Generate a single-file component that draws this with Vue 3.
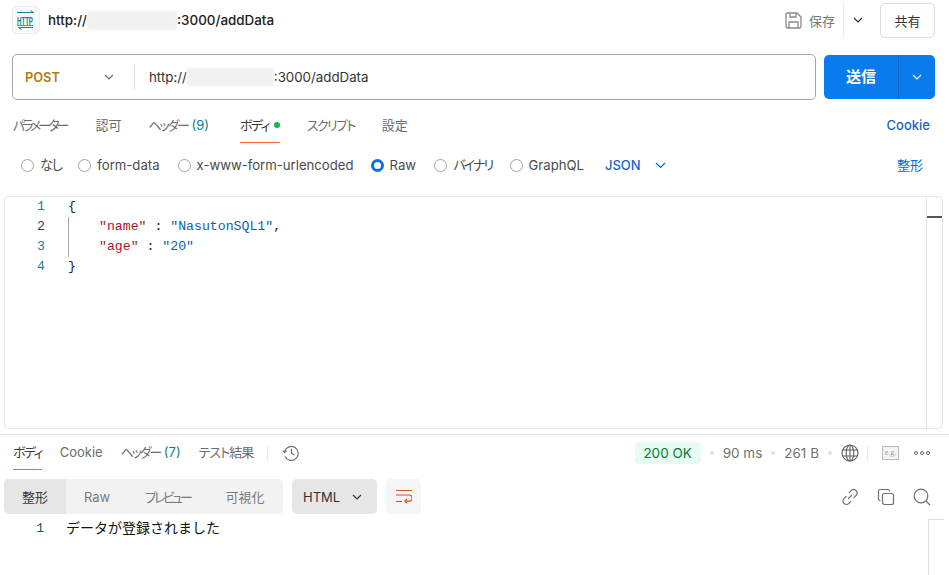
<script setup>
const reqTabs = [
  { label: 'パラメーター', fit: 'tight-30' },
  { label: '認可' },
  { label: 'ヘッダー', fit: 'tight-22', count: '(9)' },
  { label: 'ボディ', fit: 'tight-17', active: true, dot: true },
  { label: 'スクリプト', fit: 'tight-16' },
  { label: '設定' }
]
const radios = [
  { label: 'なし', fit: 'tight-25 nudge', close: true },
  { label: 'form-data' },
  { label: 'x-www-form-urlencoded', close: true },
  { label: 'Raw', on: true },
  { label: 'バイナリ', fit: 'tight-32 nudge', close: true },
  { label: 'GraphQL' }
]
const resTabs = [
  { label: 'ボディ', fit: 'tight-17', active: true },
  { label: 'Cookie' },
  { label: 'ヘッダー', fit: 'tight-22', count: '(7)' },
  { label: 'テスト結果', fit: 'tight-10' }
]
</script>

<template>
  <div class="app">
    <header class="head">
      <div class="logo">
        <svg width="20" height="20" viewBox="0 0 20 20" fill="none" stroke="#1f7f93" stroke-width="1">
          <path d="M1 2.500h16.500L14.500 .5" />
          <path d="M17 17.500H2.500l3 2" />
          <text transform="translate(1 14.500) scale(1 1.800)" class="logo-text">HTTP</text>
          <path d="M1 15.500h16" stroke-width=".8" />
        </svg>
      </div>
      <div class="title">http://<span class="blur b1"></span>:3000/addData</div>
      <div class="head-right">
        <svg class="save-ic" width="17" height="17" viewBox="0 0 17 17" fill="none" stroke="#8a8a8a" stroke-width="1.300">
          <path d="M2.500 1h9.500l4 4v9.500a1.500 1.500 0 0 1-1.500 1.500h-12A1.500 1.500 0 0 1 1 14.500v-12A1.500 1.500 0 0 1 2.500 1z" stroke-linejoin="round" />
          <path d="M5 1v4h6V1M4 16v-6h9v6" />
        </svg>
        <span class="save">保存</span>
        <span class="vsep"></span>
        <svg class="chev-save" width="10" height="6" viewBox="0 0 10 6" fill="none" stroke="#333" stroke-width="1.200"><path d="M1 1l4 4 4-4" /></svg>
        <button class="share">共有</button>
      </div>
    </header>

    <div class="req">
      <div class="urlbar">
        <span class="method">POST</span>
        <svg class="chev-m" width="10" height="6" viewBox="0 0 10 6" fill="none" stroke="#666" stroke-width="1.100"><path d="M1 1l4 4 4-4" /></svg>
        <span class="url-sep"></span>
        <span class="url">http://<span class="blur b2"></span>:3000/addData</span>
      </div>
      <div class="send">
        <span class="send-l">送信</span>
        <span class="send-r">
          <svg width="10" height="6" viewBox="0 0 10 6" fill="none" stroke="#fff" stroke-width="1.100"><path d="M1 1l4 4 4-4" /></svg>
        </span>
      </div>
    </div>

    <nav class="tabs">
      <span v-for="t in reqTabs" :key="t.label" class="tab" :class="{ active: t.active, counted: t.count }">
        <span :class="t.fit">{{ t.label }}</span><span v-if="t.count" class="count">{{ t.count }}</span><i v-if="t.dot" class="dot"></i>
      </span>
      <span class="cookie">Cookie</span>
    </nav>

    <div class="radios">
      <label v-for="r in radios" :key="r.label" class="radio" :class="{ close: r.close }">
        <i class="circle" :class="{ on: r.on }"></i><span :class="r.fit">{{ r.label }}</span>
      </label>
      <span class="json">JSON
        <svg width="11" height="7" viewBox="0 0 11 7" fill="none" stroke="#0b66d8" stroke-width="1.200"><path d="M1 1l4.500 4.500L10 1" /></svg>
      </span>
      <span class="fmt nudge">整形</span>
    </div>

    <section class="editor">
      <div class="gutter">
        <div>1</div><div class="dark">2</div><div>3</div><div>4</div>
      </div>
      <div class="code">
        <div class="guide"></div>
        <div class="ln"><span class="p">{</span></div>
        <div class="ln in"><span class="k">"name"</span> <span class="p">:</span> <span class="s">"NasutonSQL1"</span><span class="p">,</span></div>
        <div class="ln in"><span class="k">"age"</span> <span class="p">:</span> <span class="s">"20"</span></div>
        <div class="ln"><span class="p">}</span></div>
      </div>
      <div class="mini"><i></i></div>
    </section>

    <section class="res">
      <div class="res-head">
        <span v-for="t in resTabs" :key="t.label" class="rtab" :class="{ active: t.active }">
          <span :class="t.fit">{{ t.label }}</span><span v-if="t.count" class="count">{{ t.count }}</span>
        </span>
        <span class="rsep"></span>
        <svg class="hist" width="18" height="18" viewBox="0 0 18 18" fill="none" stroke="#6b6b6b" stroke-width="1.200">
          <path d="M2.600 7.400A7 7 0 1 1 3 12.500" />
          <path d="M.8 6.600l1.800 1.900 2-1.700" />
          <path d="M9.500 4.800v4.600l3 1.700" />
        </svg>
        <div class="res-meta">
          <span class="ok">200 OK</span>
          <i class="m-dot"></i><span class="meta">90 ms</span>
          <i class="m-dot"></i><span class="meta">261 B</span>
          <i class="m-dot"></i>
          <svg class="globe" width="18" height="18" viewBox="0 0 18 18" fill="none" stroke="#5f5f5f" stroke-width="1.100">
            <circle cx="9" cy="9" r="8" />
            <ellipse cx="9" cy="9" rx="3.800" ry="8" />
            <path d="M1.600 6h14.800M1.600 12h14.800M9 1v16" />
          </svg>
          <span class="msep"></span>
          <span class="eg">e.g.</span>
          <span class="more"><i></i><i></i><i></i></span>
        </div>
      </div>

      <div class="res-bar">
        <div class="seg">
          <span class="seg-on">整形</span>
          <span class="seg-i s1">Raw</span>
          <span class="seg-i s2">プレビュー</span>
          <span class="seg-i s3">可視化</span>
        </div>
        <div class="lang">HTML
          <svg width="10" height="6" viewBox="0 0 10 6" fill="none" stroke="#333" stroke-width="1.200"><path d="M1 1l4 4 4-4" /></svg>
        </div>
        <div class="wrap">
          <svg width="16" height="15" viewBox="0 0 16 15" fill="none" stroke="#e0502a" stroke-width="1.200">
            <path d="M0 1.500h16M0 6h13a3 3 0 0 1 0 6.200H9M0 12.500h6" />
            <path d="M11 10l-2.200 2.200 2.200 2" />
          </svg>
        </div>
        <div class="res-tools">
          <svg width="18" height="18" viewBox="0 0 18 18" fill="none" stroke="#707070" stroke-width="1.200" stroke-linecap="round">
            <path d="M7.500 10.500l3-3.200M8.300 4.700l1.900-2a3.300 3.300 0 0 1 4.900 4.600l-2.200 2.300M9.800 13.300l-1.900 2A3.300 3.300 0 0 1 3 10.700l2.200-2.300" />
          </svg>
          <svg width="18" height="18" viewBox="0 0 18 18" fill="none" stroke="#707070" stroke-width="1.200">
            <rect x="5.500" y="5.500" width="11" height="11" rx="2" />
            <path d="M3.500 12.500H3A1.500 1.500 0 0 1 1.500 11V3A1.500 1.500 0 0 1 3 1.500h8A1.500 1.500 0 0 1 12.500 3v.5" />
          </svg>
          <svg width="18" height="18" viewBox="0 0 18 18" fill="none" stroke="#707070" stroke-width="1.200">
            <circle cx="8" cy="8" r="6.800" />
            <path d="M13 13l4 4" />
          </svg>
        </div>
      </div>

      <div class="res-body">
        <span class="r-num">1</span>
        <span class="r-text">データが登録されました</span>
        <span class="r-scroll"></span>
      </div>
    </section>
  </div>
</template>

<style scoped>
.app {
  width: 949px;
  height: 575px;
  overflow: hidden;
  background: #fff;
  font-family: Inter, "Noto Sans CJK JP", sans-serif;
  font-size: 13px;
  color: #212121;
  display: flex;
  flex-direction: column;
  box-sizing: border-box;
}
.tight-32 { letter-spacing: -3.2px; }
.tight-30 { letter-spacing: -3px; padding-right: 2px; }
.tight-25 { letter-spacing: -2.5px; }
.tight-22 { letter-spacing: -2.25px; }
.tight-17 { letter-spacing: -1.7px; }
.tight-16 { letter-spacing: -1.6px; }
.tight-10 { letter-spacing: -1px; }
.nudge { margin-top: -2px; }
.head {
  display: flex;
  align-items: center;
  height: 40px;
  padding: 0 14px 0 12px;
  flex: none;
}
.logo {
  width: 28px;
  height: 28px;
  box-sizing: border-box;
  border: 1px solid #ececec;
  border-radius: 5px;
  background: #f9f9f9;
  display: flex;
  align-items: center;
  justify-content: center;
}
.logo-text {
  font-family: "Liberation Sans", sans-serif;
  font-size: 6.100px;
  font-weight: 700;
  fill: #1f7f93;
  stroke: none;
}
.title {
  margin-left: 8px;
  font-weight: 500;
  font-size: 13.400px;
  color: #212121;
  display: flex;
  align-items: center;
}
.blur {
  display: inline-block;
  background: #f1f1f1;
  border-radius: 2px;
  filter: blur(1px);
}
.b1 { width: 90px; height: 19px; }
.b2 { width: 87px; height: 18px; }
.head-right {
  margin-left: auto;
  display: flex;
  align-items: center;
  height: 36px;
}
.save-ic { margin-right: 7px; }
.save { color: #777; font-size: 13px; width: 26px; }
.vsep { width: 1px; height: 36px; background: #ededed; margin: 0 9px 0 8px; }
.chev-save { margin-right: 17px; }
.share {
  width: 55px;
  height: 35px;
  border: 1px solid #dcdcdc;
  border-radius: 5px;
  background: #fff;
  font: inherit;
  font-size: 13px;
  color: #333;
  padding: 0;
}
.req {
  display: flex;
  padding: 14px 14px 0 12px;
  gap: 8px;
  height: 46px;
  flex: none;
}
.urlbar {
  flex: 1;
  box-sizing: border-box;
  border: 1px solid #a6a6a6;
  border-radius: 5px;
  display: flex;
  align-items: center;
  padding-left: 12px;
}
.method { color: #b07d12; font-weight: 600; font-size: 12.800px; width: 79px; }
.url-sep { width: 1px; height: 26px; background: #e4e4e4; margin: 0 14px 0 20px; }
.url { color: #333; font-size: 13.300px; display: flex; align-items: center; }
.send {
  width: 111px;
  margin: 1px 0;
  background: #097bed;
  border-radius: 5px;
  display: flex;
  color: #fff;
  font-weight: 700;
  font-size: 15px;
}
.send-l { width: 74px; display: flex; align-items: center; justify-content: center; padding-bottom: 3px; box-sizing: border-box; }
.send-r {
  flex: 1;
  border-left: 1px solid #0667c8;
  display: flex;
  align-items: center;
  justify-content: center;
}
.tabs {
  display: flex;
  align-items: flex-start;
  height: 43px;
  padding: 0 19px 0 13px;
  box-sizing: border-box;
  flex: none;
  font-size: 13px;
  color: #6b6b6b;
  font-feature-settings: "palt";
}
.tab {
  margin-right: 27px;
  height: 43px;
  line-height: 17px;
  padding-top: 17px;
  box-sizing: border-box;
  white-space: nowrap;
  display: flex;
  align-items: flex-start;
}
.tab.counted { margin-right: 31px; }
.tab.active {
  color: #3a3a3a;
  position: relative;
}
.tab.active::after {
  content: "";
  position: absolute;
  left: 0;
  right: 0;
  top: 42px;
  height: 1px;
  background: #f26b3a;
}
.count { color: #0f7d8c; margin-left: 4px; }
.dot {
  width: 6px;
  height: 6px;
  border-radius: 50%;
  background: #0cbb52;
  margin: 5px 0 0 5px;
}
.cookie {
  margin-left: auto;
  padding-top: 17px;
  line-height: 17px;
  color: #1a5fcf;
  font-weight: 500;
  font-size: 13px;
}
.radios {
  display: flex;
  align-items: center;
  height: 44px;
  padding: 0 26px 0 21px;
  flex: none;
  font-size: 13.150px;
  color: #4a4a4a;
}
.radio {
  display: flex;
  align-items: center;
  margin-right: 18px;
  white-space: nowrap;
}
.radio.close { margin-right: 17px; }
.circle {
  width: 13px;
  height: 13px;
  box-sizing: border-box;
  border: 1px solid #a3a3a3;
  border-radius: 50%;
  margin-right: 6px;
}
.circle.on { border: 3.500px solid #0b6fd8; }
.json {
  display: flex;
  align-items: center;
  gap: 14px;
  color: #1a5fcf;
  font-weight: 500;
  margin-left: 3px;
  font-size: 13px;
}
.fmt { margin-left: auto; color: #0b66d8; font-size: 13px; }
.editor {
  position: relative;
  margin: 9px 6px 0 4px;
  height: 233px;
  flex: none;
  box-sizing: border-box;
  border: 1px solid #e6e6e6;
  border-radius: 5px;
  display: flex;
  font-family: "Liberation Mono", monospace;
  font-size: 13.200px;
  line-height: 20px;
}
.gutter {
  width: 40px;
  text-align: right;
  color: #2b7a94;
  flex: none;
}
.dark { color: #1a3f6b; }
.code {
  position: relative;
  margin-left: 23px;
  flex: 1;
}
.guide {
  position: absolute;
  left: 0;
  top: 20px;
  height: 40px;
  width: 1px;
  background: #a8a8a8;
}
.ln { height: 20px; white-space: pre; }
.in { padding-left: 31px; }
.k { color: #a3152c; }
.s { color: #0f5fa8; }
.p { color: #222; }
.mini {
  width: 15px;
  border-left: 1px solid #e6e6e6;
  flex: none;
  position: relative;
}
.mini i {
  position: absolute;
  left: 0;
  right: 0;
  top: 19px;
  height: 2px;
  background: #555;
}
.res {
  margin-top: 5px;
  border-top: 1px solid #e6e6e6;
  flex: 1;
  display: flex;
  flex-direction: column;
  min-height: 0;
}
.res-head {
  display: flex;
  align-items: flex-start;
  height: 35px;
  padding: 0 19px 0 13px;
  flex: none;
  font-size: 13px;
  color: #6b6b6b;
  font-feature-settings: "palt";
}
.rtab {
  height: 35px;
  box-sizing: border-box;
  padding-top: 9px;
  line-height: 17px;
  margin-right: 18px;
  white-space: nowrap;
  display: flex;
  position: relative;
}
.rtab.active { color: #3a3a3a; }
.rtab.active::after {
  content: "";
  position: absolute;
  left: 0;
  right: 0;
  top: 34px;
  height: 1px;
  background: #f26b3a;
}
.rsep { width: 1px; height: 14px; background: #e4e4e4; margin: 11px 14px 0 -4px; }
.hist { margin-top: 9px; }
.res-meta {
  margin-left: auto;
  display: flex;
  align-items: center;
  height: 36px;
}
.ok {
  background: #e7fbf0;
  color: #067a3c;
  font-size: 13.500px;
  height: 22px;
  line-height: 22px;
  width: 66px;
  text-align: center;
  border-radius: 5px;
  margin-right: 9px;
}
.meta { color: #707070; font-size: 13.500px; }
.m-dot {
  width: 4px;
  height: 4px;
  background: #e2e2e2;
  border-radius: 50%;
  margin-right: 9px;
}
.meta + .m-dot { margin-left: 9px; }
.msep { width: 1px; height: 14px; background: #e4e4e4; margin: 0 14px 0 8px; }
.eg {
  width: 15px;
  height: 12px;
  border: 1px solid #b9b9b9;
  font: 8px/11px "Liberation Serif", serif;
  color: #999;
  text-align: center;
  background: #f4f4f4;
}
.more {
  display: flex;
  gap: 2px;
  margin-left: 15px;
}
.more i {
  width: 4px;
  height: 4px;
  box-sizing: border-box;
  border: 1px solid #666;
  border-radius: 50%;
}
.res-bar {
  display: flex;
  height: 35px;
  margin-top: 9px;
  padding: 0 18px 0 4px;
  flex: none;
}
.seg {
  width: 279px;
  background: #f2f2f2;
  border-radius: 5px;
  display: flex;
  align-items: center;
  overflow: hidden;
  font-size: 13px;
  color: #7a7a7a;
  font-feature-settings: "palt";
}
.seg-on {
  width: 62px;
  height: 100%;
  background: #e6e6e6;
  color: #3a3a3a;
  display: flex;
  align-items: center;
  justify-content: center;
}
.seg-i { text-align: center; }
.s1 { width: 62px; }
.s2 { width: 79px; letter-spacing: -2.8px; }
.s3 { width: 76px; }
.lang {
  width: 85px;
  margin-left: 9px;
  background: #e6e6e6;
  border-radius: 5px;
  display: flex;
  align-items: center;
  justify-content: space-between;
  box-sizing: border-box;
  padding: 0 15px 0 11px;
  font-size: 13px;
  color: #333;
}
.wrap {
  width: 35px;
  margin-left: 9px;
  background: #f5f5f5;
  border-radius: 5px;
  display: flex;
  align-items: center;
  justify-content: center;
}
.res-tools {
  margin-left: auto;
  display: flex;
  align-items: center;
  gap: 18px;
}
.res-body {
  position: relative;
  flex: 1;
  font-size: 13px;
  line-height: 20px;
  display: flex;
  padding-top: 4px;
}
.r-num {
  width: 44px;
  margin-top: 1px;
  text-align: right;
  color: #0f4f8c;
  font-family: "Liberation Mono", monospace;
  font-size: 13px;
}
.r-text {
  margin-left: 22px;
  margin-top: -1px;
  font-family: "Noto Sans CJK JP", sans-serif;
  color: #111;
  font-size: 14px;
}
.r-scroll {
  position: absolute;
  left: 928px;
  top: 5px;
  bottom: 0;
  width: 15px;
  border-left: 1px solid #e0e0e0;
  border-top: 1px solid #e0e0e0;
}
</style>
